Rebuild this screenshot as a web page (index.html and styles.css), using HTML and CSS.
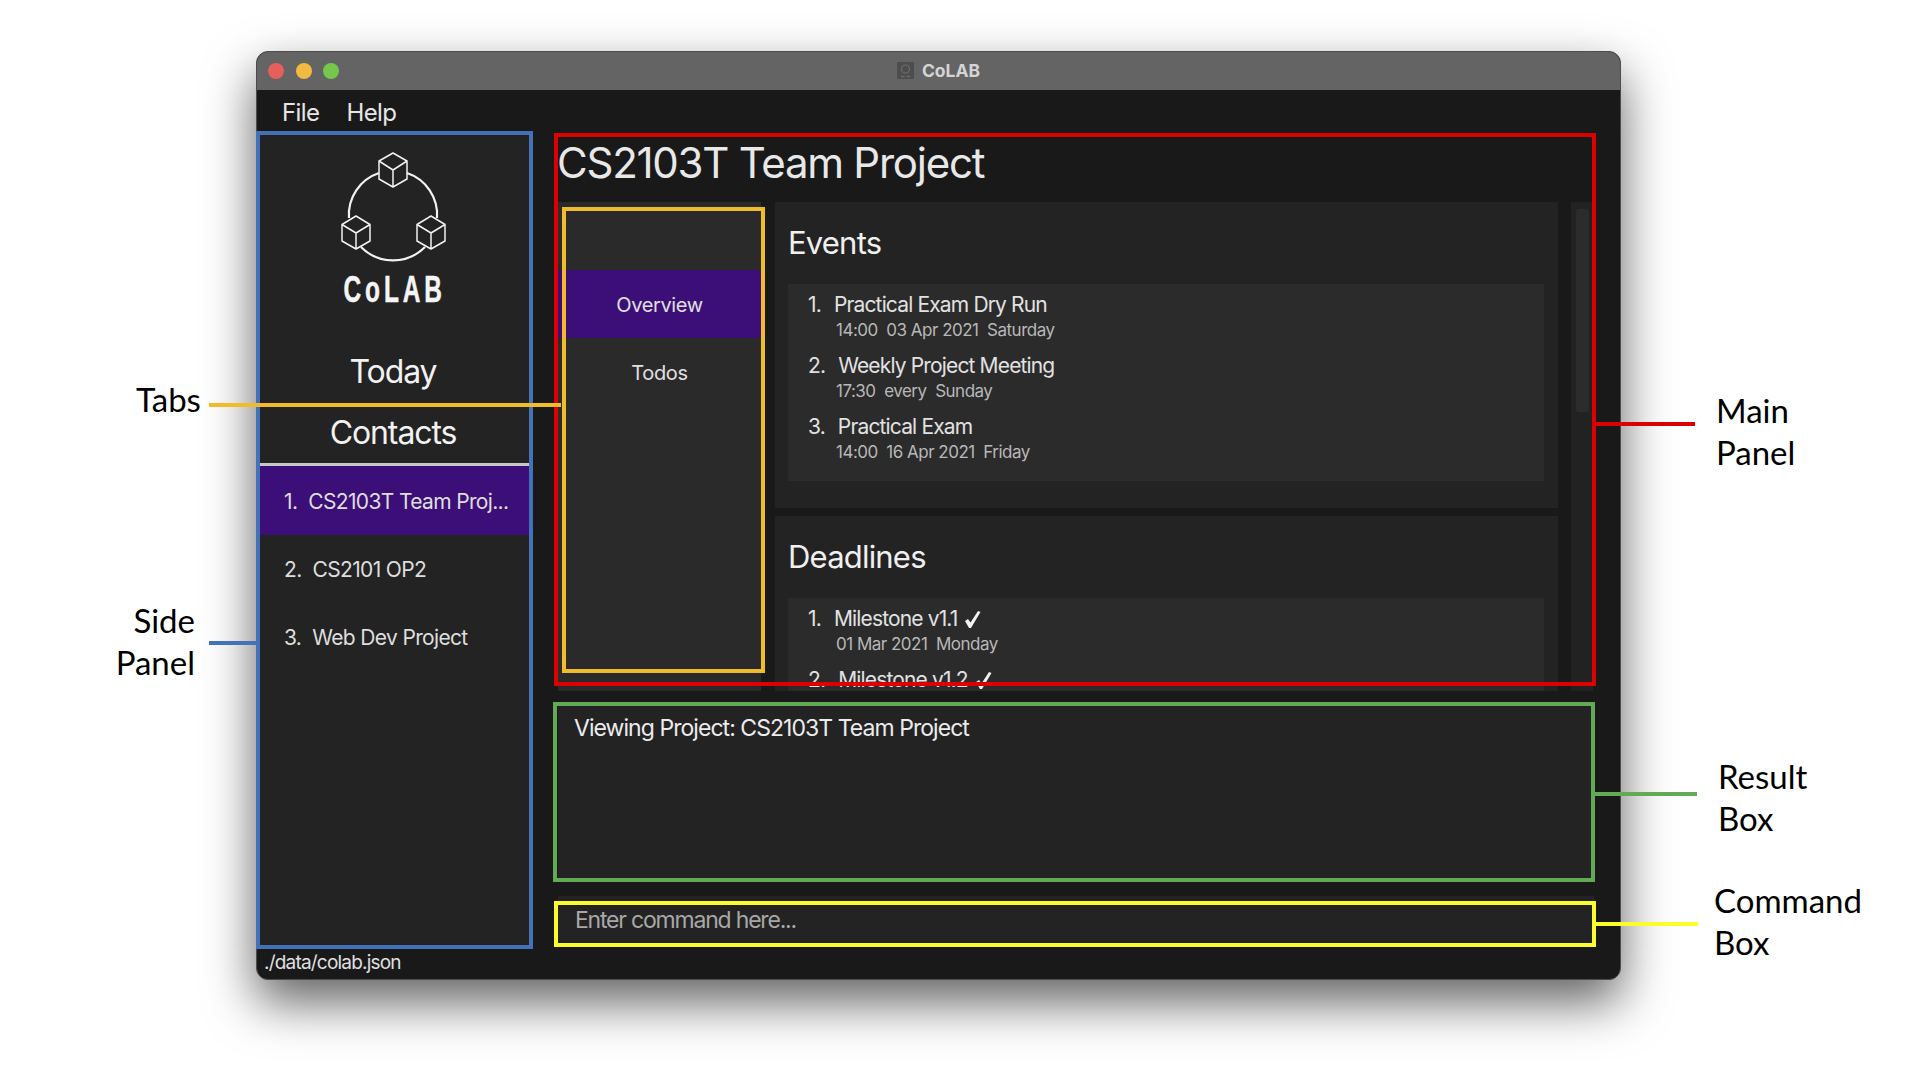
FILE: index.html
```html
<!DOCTYPE html>
<html>
  <head>
    <meta charset="utf-8">
    <title>CoLAB</title>
    <link rel="stylesheet" href="styles.css">
  </head>
  <body>
    <div class="window">
      <div class="titlebar">
        <div class="lights">
          <span class="light red"></span>
          <span class="light yellow"></span>
          <span class="light green"></span>
        </div>
        <div class="wintitle">
          <svg class="appicon" width="17" height="17" viewBox="0 0 17 17">
            <rect width="17" height="17" rx="1" fill="#4d4d4d"/>
            <circle cx="8.5" cy="7" r="4" fill="none" stroke="#6c6c6c" stroke-width="1.2"/>
            <path d="M4 14.5H7.5M9.5 14.5H13" stroke="#6c6c6c" stroke-width="1.4"/>
          </svg>
          <span>CoLAB</span>
        </div>
      </div>
      <div class="menubar">
        <span>File</span>
        <span>Help</span>
      </div>
      <div class="content">
        <div class="side">
          <div class="brand">
            <svg class="logo" width="106" height="112" viewBox="0 0 106 112">
              <g fill="none" stroke="#f2f2f2" stroke-width="1.5" stroke-linejoin="round">
                <path stroke-width="2.2" d="M39 23 A44 44 0 0 0 9 68"/>
                <path stroke-width="2.2" d="M67 23 A44 44 0 0 1 97 68"/>
                <path stroke-width="2.2" d="M21 97 A45 45 0 0 0 85 97"/>
                <path d="M53 3 L67 11 V29 L53 37 L39 29 V11 Z M39 11 L53 20 L67 11 M53 20 V37"/>
                <path d="M16 66 L30 74.5 V91 L16 99 L2 91 V74.5 Z M2 74.5 L16 83 L30 74.5 M16 83 V99"/>
                <path d="M91 66 L105 74.5 V91 L91 99 L77 91 V74.5 Z M77 74.5 L91 83 L105 74.5 M91 83 V99"/>
              </g>
            </svg>
            <div class="wordmark">CoLAB</div>
            <div class="sidelink today">Today</div>
            <div class="sidelink contacts">Contacts</div>
          </div>
          <div class="rule"></div>
          <div class="projects">
            <div class="project active"><span class="pnum">1.</span>CS2103T Team Proj...</div>
            <div class="project"><span class="pnum">2.</span>CS2101 OP2</div>
            <div class="project"><span class="pnum">3.</span>Web Dev Project</div>
          </div>
        </div>
        <div class="mainarea">
          <h1 class="projecttitle">CS2103T Team Project</h1>
          <div class="panes">
            <div class="tabs">
              <div class="tab active">Overview</div>
              <div class="tab">Todos</div>
            </div>
            <div class="cards">
              <section class="card events">
                <h2>Events</h2>
                <div class="list">
                  <div class="item">
                    <div class="itemname"><span class="num">1.</span>Practical Exam Dry Run</div>
                    <div class="itemsub">14:00&nbsp; 03 Apr 2021&nbsp; Saturday</div>
                  </div>
                  <div class="item">
                    <div class="itemname"><span class="num">2.</span>Weekly Project Meeting</div>
                    <div class="itemsub">17:30&nbsp; every&nbsp; Sunday</div>
                  </div>
                  <div class="item">
                    <div class="itemname"><span class="num">3.</span>Practical Exam</div>
                    <div class="itemsub">14:00&nbsp; 16 Apr 2021&nbsp; Friday</div>
                  </div>
                </div>
              </section>
              <section class="card deadlines">
                <h2>Deadlines</h2>
                <div class="list">
                  <div class="item">
                    <div class="itemname"><span class="num">1.</span>Milestone v1.1<svg class="tick" width="17" height="17" viewBox="0 0 17 17"><path d="M1 10 L4 8 L6.5 11.5 L14 0 L16.5 1 L7 17 L5 17 Z"/></svg></div>
                    <div class="itemsub">01 Mar 2021&nbsp; Monday</div>
                  </div>
                  <div class="item">
                    <div class="itemname"><span class="num">2.</span>Milestone v1.2<svg class="tick" width="17" height="17" viewBox="0 0 17 17"><path d="M1 10 L4 8 L6.5 11.5 L14 0 L16.5 1 L7 17 L5 17 Z"/></svg></div>
                  </div>
                </div>
              </section>
            </div>
            <div class="scrolltrack"><div class="scrollthumb"></div></div>
          </div>
          <div class="result">Viewing Project: CS2103T Team Project</div>
          <div class="command">Enter command here...</div>
        </div>
      </div>
      <div class="statusbar">./data/colab.json</div>
    </div>

    <!-- annotations drawn over the screenshot -->
    <div class="box box-side"></div>
    <div class="box box-main"></div>
    <div class="box box-tabs"></div>
    <div class="box box-result"></div>
    <div class="box box-command"></div>
    <div class="line line-tabs"></div>
    <div class="line line-side"></div>
    <div class="line line-main"></div>
    <div class="line line-result"></div>
    <div class="line line-command"></div>
    <div class="note note-tabs">Tabs</div>
    <div class="note note-side">Side<br>Panel</div>
    <div class="note note-main">Main<br>Panel</div>
    <div class="note note-result">Result<br>Box</div>
    <div class="note note-command">Command<br>Box</div>
  </body>
</html>
```

FILE: styles.css
```css
*{
  margin: 0;
  padding: 0;
  box-sizing: border-box;
}
html,body{
  height: 100%;
  overflow: hidden;
}
body{
  position: relative;
  background: #fff;
  font-family: Inter, "Liberation Sans", sans-serif;
  color: #eee;
}

/* window */
.window{
  margin: 51px 0 0 256px;
  width: 1365px;
  height: 929px;
  display: flex;
  flex-direction: column;
  background: #191919;
  border: 1px solid #4c4c4c;
  border-radius: 12px;
  box-shadow: 0 22px 50px rgba(0,0,0,.62);
  overflow: hidden;
}
.titlebar{
  height: 38px;
  flex: none;
  display: flex;
  align-items: center;
  position: relative;
  background: #646465;
}
.lights{
  display: flex;
  gap: 11.5px;
  padding-left: 11px;
}
.light{
  width: 16px;
  height: 16px;
  border-radius: 50%;
}
.red{ background: #e5605a; }
.yellow{ background: #efbb40; }
.green{ background: #74c94d; }
.wintitle{
  position: absolute;
  left: 0;
  right: 0;
  top: 0;
  height: 38px;
  padding-bottom: 2px;
  display: flex;
  align-items: center;
  justify-content: center;
  gap: 8px;
  font-size: 17.5px;
  font-weight: 700;
  color: #d4d4d4;
}
.menubar{
  height: 41px;
  flex: none;
  display: flex;
  align-items: center;
  gap: 27px;
  padding: 4px 0 0 25px;
  font-size: 24px;
  letter-spacing: -.6px;
  color: #e6e6e6;
}
.content{
  flex: 1;
  min-height: 0;
  display: flex;
}
.statusbar{
  height: 30px;
  flex: none;
  padding-left: 7px;
  line-height: 28px;
  font-size: 19px;
  letter-spacing: -.8px;
  color: #e0e0e0;
}

/* side panel */
.side{
  width: 276px;
  flex: none;
  background: #232323;
}
.brand{
  display: flex;
  flex-direction: column;
  align-items: center;
  padding-right: 4px;
}
.logo{
  margin-top: 19px;
  flex: none;
}
.wordmark{
  margin-top: 10px;
  margin-left: 3px;
  height: 36px;
  line-height: 36px;
  font-family: "Liberation Sans", sans-serif;
  font-size: 37px;
  font-weight: 700;
  letter-spacing: 6px;
  color: #f5f5f5;
  -webkit-text-stroke: .5px #f5f5f5;
  transform: scaleX(.66);
}
.sidelink{
  width: 100%;
  text-align: center;
  font-size: 32px;
  letter-spacing: -1.1px;
  color: #f2f2f2;
}
.today{
  margin-top: 41px;
  height: 45px;
  line-height: 46px;
}
.contacts{
  height: 69px;
  padding-top: 9px;
  line-height: 60px;
}
.rule{
  height: 3px;
  background: #c8c8c8;
}
.project{
  height: 68px;
  padding-left: 27px;
  line-height: 70px;
  font-size: 21px;
  letter-spacing: -.65px;
  color: #dedede;
}
.project.active{
  height: 69px;
  line-height: 72px;
  background: #3c0f78;
}
.pnum{
  margin-right: 11px;
}

/* main panel */
.mainarea{
  flex: 1;
  min-width: 0;
  padding-left: 25px;
  padding-right: 26px;
  display: flex;
  flex-direction: column;
}
.projecttitle{
  height: 71px;
  line-height: 64px;
  margin-left: -1px;
  font-size: 42px;
  font-weight: 400;
  letter-spacing: -1.25px;
  color: #e8e8e8;
}
.panes{
  height: 489px;
  flex: none;
  display: flex;
  overflow: hidden;
}
.tabs{
  width: 203px;
  flex: none;
  padding-top: 68px;
  background: #2a2a2a;
}
.tab{
  height: 68px;
  padding-top: 1px;
  line-height: 68px;
  text-align: center;
  font-size: 20px;
  letter-spacing: -.35px;
  color: #e0e0e0;
}
.tab.active{
  background: #3c0f78;
}
.cards{
  width: 783px;
  margin-left: 14px;
  flex: none;
  display: flex;
  flex-direction: column;
  gap: 8px;
}
.card{
  padding: 0 14px 0 13px;
  background: #232323;
  flex: none;
  height: 306px;
}
.card h2{
  height: 82px;
  line-height: 82px;
  font-size: 31px;
  font-weight: 400;
  letter-spacing: -.8px;
  color: #f0f0f0;
}
.list{
  padding: 8px 0 0 20px;
  height: 197px;
  background: #2b2b2b;
}
.item{
  height: 61px;
}
.itemname{
  height: 28px;
  font-size: 21px;
  line-height: 26px;
  letter-spacing: -.85px;
  color: #e2e2e2;
}
.num{
  margin-right: 13px;
}
.itemsub{
  padding-left: 28px;
  font-size: 17px;
  line-height: 20px;
  letter-spacing: -.5px;
  color: #b8b8b8;
}
.tick{
  margin-left: 7px;
  vertical-align: -2px;
  fill: #f2f2f2;
}
.scrolltrack{
  width: 22px;
  margin-left: 13px;
  flex: none;
  padding: 7px 4px 7px 5px;
  background: #222;
}
.scrollthumb{
  height: 203px;
  border-radius: 3px;
  background: #2c2c2c;
}
.result{
  height: 180px;
  margin-top: 11px;
  padding: 11px 0 0 16px;
  line-height: 30px;
  font-size: 23px;
  letter-spacing: -.95px;
  color: #ececec;
  background: #232323;
}
.command{
  height: 51px;
  margin-top: 14px;
  padding: 9px 0 0 17px;
  line-height: 30px;
  font-size: 23px;
  letter-spacing: -1.2px;
  color: #a8a8a8;
  background: #232323;
}

/* annotations */
.box{
  position: absolute;
  border: 4px solid;
}
.box-side{
  left: 256px;
  top: 131px;
  width: 277px;
  height: 818px;
  border-color: #4472b8;
}
.box-main{
  left: 554px;
  top: 133px;
  width: 1042px;
  height: 553px;
  border-color: #dc0000;
}
.box-tabs{
  left: 562px;
  top: 207px;
  width: 203px;
  height: 466px;
  border-color: #f1bc2c;
}
.box-result{
  left: 553px;
  top: 702px;
  width: 1042px;
  height: 180px;
  border-color: #62aa55;
}
.box-command{
  left: 554px;
  top: 901px;
  width: 1042px;
  height: 46px;
  border-color: #fcfc2c;
}
.line{
  position: absolute;
  height: 4px;
}
.line-tabs{
  left: 209px;
  top: 403px;
  width: 352px;
  background: #f1bc2c;
}
.line-side{
  left: 209px;
  top: 641px;
  width: 48px;
  background: #4472b8;
}
.line-main{
  left: 1593px;
  top: 422px;
  width: 102px;
  background: #dc0000;
}
.line-result{
  left: 1593px;
  top: 792px;
  width: 104px;
  background: #62aa55;
}
.line-command{
  left: 1594px;
  top: 922px;
  width: 104px;
  background: #fcfc2c;
}
.note{
  position: absolute;
  font-family: Lato, "Open Sans", sans-serif;
  font-size: 33px;
  line-height: 42px;
  color: #000;
}
.note-tabs{ left: 136px; top: 378px; }
.note-side{ left: 105px; top: 599px; text-align: right; width: 90px; }
.note-main{ left: 1716px; top: 389px; }
.note-result{ left: 1718px; top: 755px; }
.note-command{ left: 1714px; top: 879px; }
```
